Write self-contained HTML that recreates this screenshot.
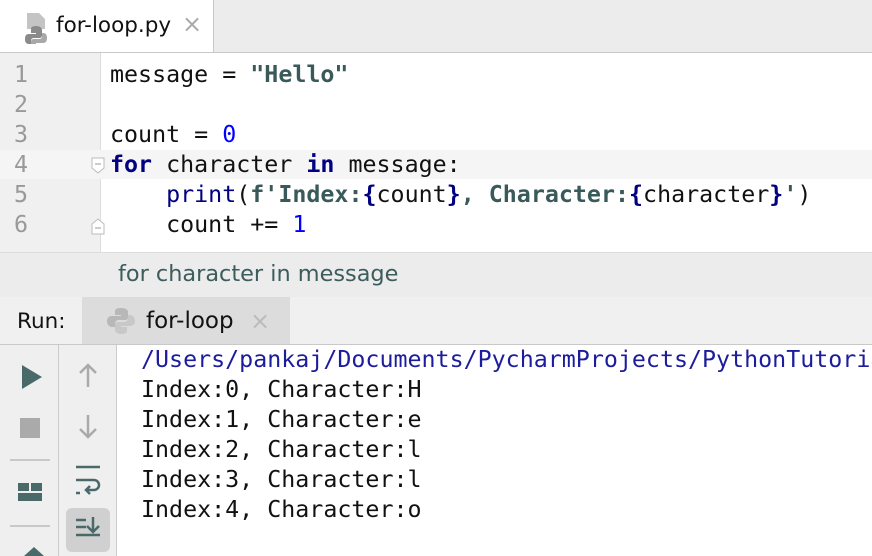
<!DOCTYPE html><html><head><style>
body{margin:0;width:872px;height:556px;overflow:hidden;background:#fff;position:relative;font-family:"DejaVu Sans","Liberation Sans",sans-serif}
.a{position:absolute}
.mono{font-family:"DejaVu Sans Mono",monospace;font-size:23.3px;white-space:pre}
.kw{color:#000080;font-weight:bold}
.st{color:#3a5a5a;font-weight:bold}
.nm{color:#0000ff}
.bi{color:#000080}
</style></head><body>
<div class="a" style="left:0;top:0;width:872px;height:52px;background:#ececec;border-bottom:1px solid #c9c9c9"></div>
<div class="a" style="left:0;top:0;width:213px;height:52px;background:#fff;border-right:1px solid #c9c9c9"></div>
<svg class="a" style="left:22px;top:10px" width="30" height="34"><path d="M5 3h12l6 6v10H5z" fill="#c4c4c4"/><path d="M14 16c-5 0-5 2-5 4v3h5v1H7c-3 0-4 2-4 5s1 5 4 5h2v-3c0-2 1-3 3-3h5c2 0 3-1 3-3v-5c0-2-2-4-6-4z" fill="#8a8a8a"/><path d="M14 40c5 0 5-2 5-4v-2h-5v-1h7c3 0 4-2 4-5s-1-5-4-5h-1v3c0 2-1 3-3 3h-5c-2 0-3 1-3 3v4c0 2 2 4 5 4z" fill="#a8a8a8"/></svg>
<div class="a" style="left:56px;top:13px;font-size:21.5px;color:#111">for-loop.py</div>
<div class="a" style="left:182px;top:10px;font-size:24px;color:#aaa">×</div>
<div class="a" style="left:0;top:53px;width:100px;height:199px;background:#f0f0f0;border-right:1px solid #ddd"></div>
<div class="a" style="left:0;top:150px;width:872px;height:29px;background:#f5f5f5"></div>
<div class="a mono" style="left:14px;top:60px;line-height:30px;color:#999">1
2
3
4
5
6</div>
<div class="a mono" style="left:110px;top:60px;line-height:30px;color:#111">message = <span class="st">"Hello"</span>

count = <span class="nm">0</span>
<span class="kw">for</span> character <span class="kw">in</span> message:
    <span class="bi">print</span>(<span class="st">f'Index:<span class="kw">{</span></span>count<span class="st"><span class="kw">}</span>, Character:<span class="kw">{</span></span>character<span class="st"><span class="kw">}</span>'</span>)
    count += <span class="nm">1</span></div>
<svg class="a" style="left:90px;top:156px" width="16" height="80"><path d="M2 2h12v10l-6 5-6-5z" fill="#fff" stroke="#bbb"/><path d="M5 8h6" stroke="#999"/><path d="M2 78V68l6-5 6 5v10z" fill="#fff" stroke="#bbb"/><path d="M5 72h6" stroke="#999"/></svg>
<div class="a" style="left:0;top:252px;width:872px;height:44px;background:#ececec;border-top:1px solid #ddd;border-bottom:1px solid #c9c9c9"></div>
<div class="a" style="left:118px;top:261px;font-size:22.4px;color:#3d5c5c">for character in message</div>
<div class="a" style="left:0;top:297px;width:872px;height:47px;background:#f0f0f0;border-bottom:1px solid #c9c9c9"></div>
<div class="a" style="left:82px;top:297px;width:208px;height:47px;background:#dcdcdc"></div>
<div class="a" style="left:17px;top:309px;font-size:21.5px;color:#111">Run:</div>
<svg class="a" style="left:106px;top:306px" width="30" height="30"><path d="M15 2c-6 0-6 2-6 4v3h6v1H6c-3 0-5 2-5 5s2 6 5 6h3v-3c0-2 1-4 4-4h6c2 0 3-1 3-3V6c0-2-2-4-7-4z" fill="#b8b8b8"/><path d="M15 28c6 0 6-2 6-4v-3h-6v-1h9c3 0 5-2 5-5s-2-6-5-6h-2v3c0 2-1 4-4 4h-6c-2 0-3 1-3 3v5c0 2 2 4 6 4z" fill="#c8c8c8"/></svg>
<div class="a" style="left:146px;top:308px;font-size:23px;color:#111">for-loop</div>
<div class="a" style="left:250px;top:307px;font-size:24px;color:#bbb">×</div>
<div class="a" style="left:0;top:345px;width:58px;height:211px;background:#efefef;border-right:1px solid #ccc"></div>
<div class="a" style="left:59px;top:345px;width:57px;height:211px;background:#efefef;border-right:1px solid #ccc"></div>
<svg class="a" style="left:0;top:345px" width="117" height="211">
<path d="M22 20l20 12-20 12z" fill="#4a6a6a"/>
<rect x="20" y="73" width="20" height="20" fill="#aaa"/>
<path d="M10 115h40M10 181h40" stroke="#bbb" stroke-width="1.5"/>
<rect x="18" y="138" width="24" height="18" fill="#4a6a6a"/><path d="M18 147h24M30 138v9" stroke="#efefef" stroke-width="2"/>
<path d="M24 211l10-9 10 9z" fill="#4a6a6a"/>
<path d="M88 20v22M80 28l8-8 8 8" stroke="#aaa" stroke-width="2.5" fill="none"/>
<path d="M88 70v22M80 84l8 8 8-8" stroke="#aaa" stroke-width="2.5" fill="none"/>
<path d="M76 122h24M76 135h18a5 5 0 0 1 0 10h-8M90 141l-4 4 4 4M76 148h4" stroke="#4a6a6a" stroke-width="2.5" fill="none"/>
<rect x="66" y="163" width="44" height="44" rx="6" fill="#d0d0d0"/>
<path d="M76 175h10M76 182h10M76 190h24M93 172v15M87 181l6 6 6-6" stroke="#4a6a6a" stroke-width="2.5" fill="none"/>
</svg>
<div class="a mono" style="left:141px;top:345px;line-height:30px;color:#111"><span style="color:#1c1c9c">/Users/pankaj/Documents/PycharmProjects/PythonTutorials</span>
Index:0, Character:H
Index:1, Character:e
Index:2, Character:l
Index:3, Character:l
Index:4, Character:o</div>
</body></html>
